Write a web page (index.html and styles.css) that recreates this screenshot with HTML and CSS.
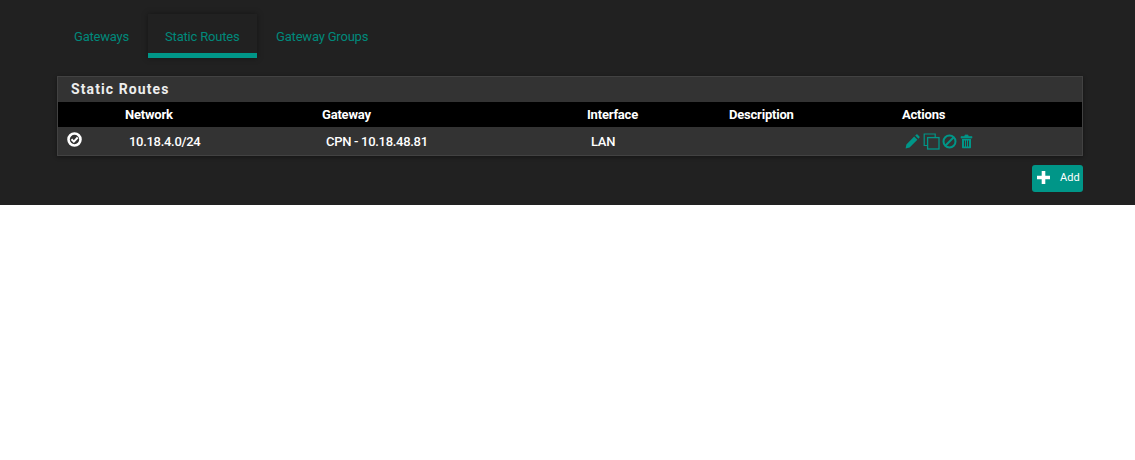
FILE: index.html
```html
<!DOCTYPE html>
<html lang="en">
<head>
    <meta charset="UTF-8">
    <title>Static Routes</title>
    <link rel="stylesheet" href="styles.css">
</head>
<body>
<div class="page">
    <ul class="tabs">
        <li class="tab">Gateways</li>
        <li class="tab active">Static Routes</li>
        <li class="tab">Gateway Groups</li>
    </ul>
    <div class="panel">
        <h2 class="panel-title">Static Routes</h2>
        <table class="routes">
            <thead>
                <tr>
                    <th class="col-state"></th>
                    <th class="col-network">Network</th>
                    <th class="col-gateway">Gateway</th>
                    <th class="col-interface">Interface</th>
                    <th class="col-description">Description</th>
                    <th>Actions</th>
                </tr>
            </thead>
            <tbody>
                <tr>
                    <td class="state">
                        <svg class="state-icon" viewBox="0 0 14 14" width="15" height="15">
                            <circle cx="7" cy="7" r="5.6" fill="none" stroke="#fff" stroke-width="2.4"/>
                            <path d="M4.2 6.8l2.2 2.2 3.6-3.8" fill="none" stroke="#fff" stroke-width="1.9"/>
                        </svg>
                    </td>
                    <td>10.18.4.0/24</td>
                    <td>CPN - 10.18.48.81</td>
                    <td>LAN</td>
                    <td></td>
                    <td class="actions">
                        <svg viewBox="0 0 15 15" width="15" height="15">
                            <path d="M0.6 14.4l.8-4 7.8-7.8 3.2 3.2-7.8 7.8zM10.2 1.6l1.1-1a.9.9 0 0 1 1.2 0l1.9 1.9a.9.9 0 0 1 0 1.2l-1 1.1z" fill="#009688"/>
                        </svg>
                        <svg viewBox="0 0 17 17" width="17" height="17">
                            <path d="M4 12.5H1.2V1h11v3" fill="none" stroke="#009688" stroke-width="1.2"/>
                            <rect x="4.6" y="4.6" width="11.4" height="11.4" fill="none" stroke="#009688" stroke-width="1.3"/>
                        </svg>
                        <svg viewBox="0 0 15 15" width="15" height="15">
                            <circle cx="7.5" cy="7.5" r="6" fill="none" stroke="#009688" stroke-width="2"/>
                            <path d="M3.5 11.5l8-8" stroke="#009688" stroke-width="2"/>
                        </svg>
                        <svg viewBox="0 0 13 15" width="13" height="15">
                            <path d="M1 2.5h11v1.6H1zM4.5 2.5l.6-1.6h2.8l.6 1.6" fill="#009688" stroke="#009688" stroke-width=".6"/>
                            <path d="M2 5v8.2c0 .6.4 1 1 1h7c.6 0 1-.4 1-1V5zM4 6.5h1v6H4zm2 0h1v6H6zm2 0h1v6H8z" fill="#009688" fill-rule="evenodd"/>
                        </svg>
                    </td>
                </tr>
            </tbody>
        </table>
    </div>
    <div class="buttons">
        <button class="btn-add">
            <svg viewBox="0 0 13 13" width="13" height="13">
                <path d="M4.7 0h3.6v4.7H13v3.6H8.3V13H4.7V8.3H0V4.7h4.7z" fill="#fff"/>
            </svg>
            <span>Add</span>
        </button>
    </div>
</div>
</body>
</html>
```

FILE: styles.css
```css
*{
    margin: 0;
    padding: 0;
    box-sizing: border-box;
}
body{
    background-color: #fff;
    font-family: Roboto, "Liberation Sans", sans-serif;
    font-size: 13px;
}
.page{
    height: 205px;
    padding: 14px 52px 0 57px;
    background-color: #212121;
}
.tabs{
    display: flex;
    gap: 2px;
    height: 44px;
    list-style: none;
}
.tab{
    padding: 15px 17px 0;
    color: #00897b;
    letter-spacing: -0.2px;
}
.tab.active{
    width: 109px;
    border-bottom: 5px solid #009688;
    box-shadow: 0 0 6px rgba(0,0,0,0.4);
}
.panel{
    margin-top: 18px;
    border: 1px solid #424242;
    background-color: #333;
    box-shadow: 0 1px 4px rgba(0,0,0,0.4);
}
.panel-title{
    height: 25px;
    padding-left: 13px;
    font-size: 14px;
    line-height: 24px;
    font-weight: 700;
    letter-spacing: 1.1px;
    color: #eee;
}
.routes{
    width: 100%;
    border-collapse: collapse;
    table-layout: fixed;
    color: #fff;
}
.routes th{
    height: 25px;
    padding-left: 4px;
    background-color: #000;
    text-align: left;
    font-weight: 700;
    letter-spacing: -0.2px;
}
.routes td{
    height: 28px;
    padding-left: 8px;
    font-weight: 500;
    letter-spacing: -0.3px;
}
.col-state{
    width: 63px;
}
.col-network{
    width: 197px;
}
.col-gateway{
    width: 265px;
}
.col-interface{
    width: 142px;
}
.col-description{
    width: 173px;
}
.routes td.state{
    padding-left: 9px;
    vertical-align: top;
    padding-top: 5px;
}
.state-icon{
    display: block;
}
.routes td.actions{
    padding-left: 7px;
    font-size: 0;
    vertical-align: middle;
}
.actions svg{
    vertical-align: middle;
    margin-right: 2.5px;
}
.buttons{
    display: flex;
    justify-content: flex-end;
    margin-top: 9px;
}
.btn-add{
    display: flex;
    align-items: center;
    gap: 10px;
    width: 51px;
    height: 27px;
    padding: 0 0 2px 5px;
    border: none;
    border-radius: 3px;
    background-color: #009688;
    color: #fff;
    font-family: inherit;
    font-size: 11px;
    font-weight: 400;
}
```
